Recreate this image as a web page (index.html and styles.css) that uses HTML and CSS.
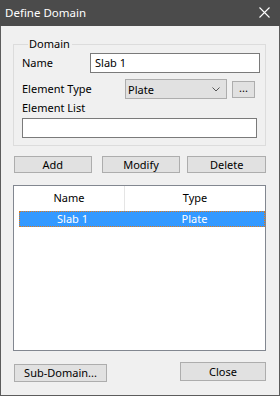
FILE: index.html
```html
<!DOCTYPE html>
<html>
<head>
<meta charset="utf-8">
<link rel="stylesheet" href="styles.css">
</head>
<body>
<div class="window">
  <div class="titlebar">
    <span class="title">Define Domain</span>
    <svg class="close" width="11" height="11" viewBox="0 0 11 11"><path d="M0.5 0.5 L10.5 10.5 M10.5 0.5 L0.5 10.5" stroke="#fff" stroke-width="1.1"/></svg>
  </div>
  <div class="content">
    <fieldset class="group">
      <legend>Domain</legend>
      <div class="row name-row">
        <span class="label">Name</span>
        <div class="input name-input">Slab 1</div>
      </div>
      <div class="row type-row">
        <span class="label">Element Type</span>
        <div class="select">
          <span>Plate</span>
          <svg width="8" height="5" viewBox="0 0 8 5"><path d="M0.5 0.5 L4 4 L7.5 0.5" stroke="#555" stroke-width="1" fill="none"/></svg>
        </div>
        <div class="btn dots">...</div>
      </div>
      <div class="label list-label">Element List</div>
      <div class="input list-input"></div>
    </fieldset>
    <div class="buttons">
      <div class="btn b-add">Add</div>
      <div class="btn b-mod">Modify</div>
      <div class="btn b-del">Delete</div>
    </div>
    <div class="listbox">
      <div class="header">
        <div class="col c1">Name</div>
        <div class="col c2">Type</div>
      </div>
      <div class="item">
        <div class="col c1">Slab 1</div>
        <div class="col c2">Plate</div>
      </div>
    </div>
    <div class="footer">
      <div class="btn b-sub">Sub-Domain...</div>
      <div class="btn b-close">Close</div>
    </div>
  </div>
</div>
</body>
</html>
```
FILE: styles.css
```css
* { box-sizing: border-box; }
html, body { margin: 0; padding: 0; }
body {
  width: 280px;
  height: 396px;
  font-family: "Noto Sans", "Open Sans", sans-serif;
  font-size: 11px;
  color: #000;
  background: #4b4b4b;
}
.window {
  width: 280px;
  height: 396px;
  border: 1px solid #5c5c5c;
  border-top: none;
  display: flex;
  flex-direction: column;
  background: #f0f0f0;
}
.titlebar {
  height: 26px;
  background: #4b4b4b;
  display: flex;
  align-items: center;
  justify-content: space-between;
  padding: 0 10px 0 4px;
  color: #fff;
  margin: 0 -1px;
}
.title { font-size: 11.5px; line-height: 26px; padding-left: 1px; padding-bottom: 1px; }
.close { margin-bottom: 1px; }
.content {
  flex: 1;
  padding: 11px 13px 0 12px;
  display: flex;
  flex-direction: column;
}
.group {
  margin: 0;
  border: 1px solid #dcdcdc;
  padding: 0 5px 7px 8px;
  display: flex;
  flex-direction: column;
}
.group legend {
  padding: 0 2px 0 1px;
  margin-left: 6px;
  line-height: 14px;
}
.row { display: flex; align-items: center; }
.label { line-height: 14px; }
.name-row { height: 20px; margin-top: 2px; }
.name-row .label { width: 68px; }
.input {
  background: #fff;
  border: 1px solid #7a7a7a;
  height: 20px;
  line-height: 17px;
  padding-left: 4px;
}
.name-input { flex: 1; }
.type-row { height: 20px; margin-top: 6px; }
.type-row .label { width: 103px; }
.select {
  width: 102px;
  height: 20px;
  border: 1px solid #adadad;
  background: #e1e1e1;
  display: flex;
  align-items: center;
  justify-content: space-between;
  padding: 0 6px 0 2px;
}
.btn {
  border: 1px solid #adadad;
  background: #e1e1e1;
  display: flex;
  align-items: center;
  justify-content: center;
  line-height: 14px;
}
.dots {
  width: 23px;
  height: 17px;
  margin-left: 5px;
  padding-bottom: 3px;
}
.list-label { margin-top: 2px; }
.list-input { margin-top: 3px; width: 235px; }
.buttons {
  display: flex;
  margin-top: 10px;
  height: 17px;
}
.buttons .btn { height: 17px; }
.b-add { width: 78px; margin-left: 1px; }
.b-mod { width: 79px; margin-left: 10px; }
.b-del { width: 79px; margin-left: 7px; }
.listbox {
  margin-top: 12px;
  height: 166px;
  border: 1px solid #828790;
  background: #fff;
  padding: 0;
}
.header {
  display: flex;
  height: 25px;
}
.header .col { line-height: 24px; }
.header .c1 { border-right: 1px solid #e5e5e5; }
.col { text-align: center; }
.c1 { width: 111px; }
.c2 { flex: 1; }
.item {
  display: flex;
  height: 16px;
  background: #3399ff;
  color: #fff;
  line-height: 14px;
  border: 1px dotted #e07b1a;
  margin: 0 0 0 5px;
}
.item .c1 { width: 105px; }
.footer {
  display: flex;
  justify-content: space-between;
  align-items: flex-start;
  margin-top: 11px;
}
.b-sub { width: 93px; height: 18px; margin-left: 1px; margin-top: 2px; }
.b-close { width: 86px; height: 19px; }
```
